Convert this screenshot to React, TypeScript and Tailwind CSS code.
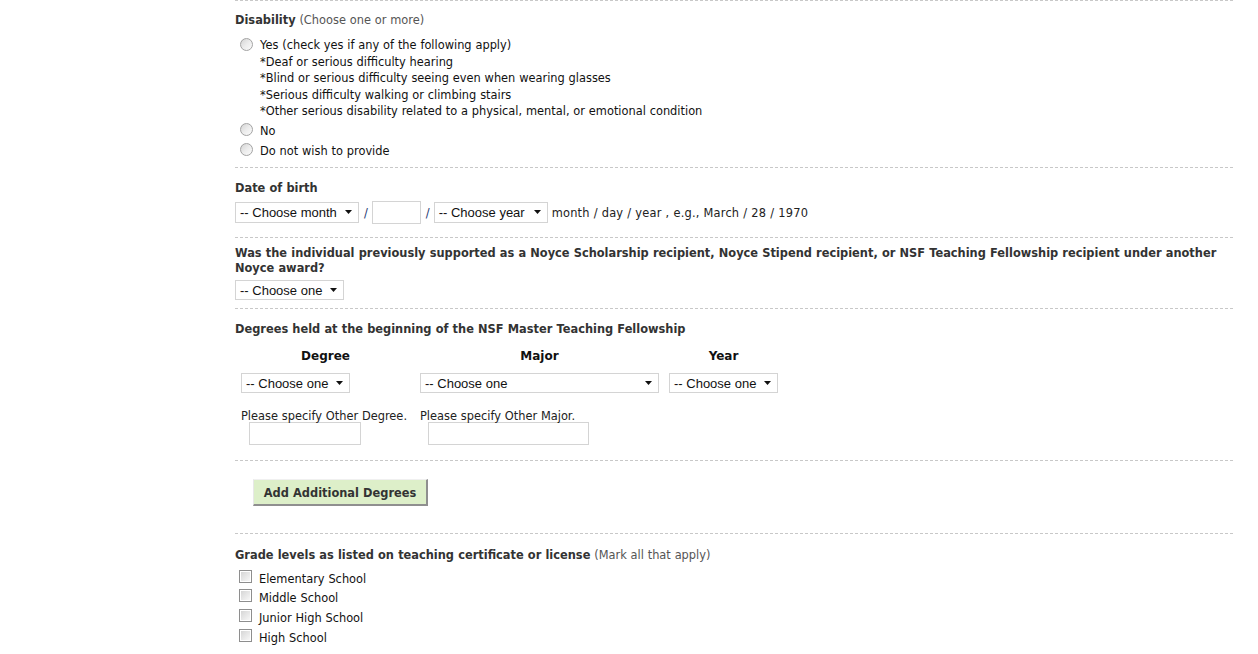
import React from "react";

const Radio = ({ className = "" }: { className?: string }) => (
  <span
    className={`block w-[13px] h-[13px] rounded-full border border-[#a3a3a3] bg-linear-to-br from-[#d4d4d4] via-[#ececec] to-[#fbfbfb] ${className}`}
  />
);

const Checkbox = () => (
  <span className="block w-[13px] h-[13px] border border-[#8e8e8e] bg-white p-[1px]">
    <span className="block w-full h-full bg-linear-to-br from-[#d6d6d6] to-[#f7f7f7]" />
  </span>
);

const Select = ({ label, w, h = "h-[20px]" }: { label: string; w: string; h?: string }) => (
  <div
    className={`${w} ${h} flex items-center justify-between border border-[#d4d4d4] bg-white pl-[4px] pr-[6px] font-['Liberation_Sans',Arial,sans-serif] text-[13px] text-[#111] leading-none [word-spacing:0px]`}
  >
    <span className="whitespace-nowrap">{label}</span>
    <svg width="7" height="4" viewBox="0 0 7 4" className="shrink-0">
      <path d="M0 0h7L3.5 4z" fill="#111" />
    </svg>
  </div>
);

const TextBox = ({ w, h = "h-[23px]" }: { w: string; h?: string }) => (
  <div className={`${w} ${h} border border-[#d4d4d4] bg-white`} />
);

const Section = ({
  className = "",
  children,
}: {
  className?: string;
  children: React.ReactNode;
}) => (
  <section className={`border-t border-dashed border-[#c8c8c8] ${className}`}>
    {children}
  </section>
);

export default function App() {
  return (
    <div className="w-[1258px] h-[654px] overflow-hidden bg-white font-['DejaVu_Sans',Verdana,sans-serif] text-[11.4px] [word-spacing:0.2px] text-[#111]">
      <div className="ml-[235px] w-[998px]">
        {/* Disability */}
        <Section className="pt-[11px] pb-[6px]">
          <div className="leading-[16px] text-[#333]">
            <span className="font-bold">Disability</span>{" "}
            <span className="text-[#555]">(Choose one or more)</span>
          </div>
          <div className="mt-[9px]">
            <div className="flex leading-[16.5px]">
              <div className="w-[25px] pl-[5px] pt-[1px]">
                <Radio />
              </div>
              <div>
                <div>Yes (check yes if any of the following apply)</div>
                <div>*Deaf or serious difficulty hearing</div>
                <div>*Blind or serious difficulty seeing even when wearing glasses</div>
                <div>*Serious difficulty walking or climbing stairs</div>
                <div>
                  *Other serious disability related to a physical, mental, or emotional condition
                </div>
              </div>
            </div>
            <div className="flex leading-[20px] mt-[1.5px]">
              <div className="w-[25px] pl-[5px] pt-[2px]">
                <Radio />
              </div>
              <div>No</div>
            </div>
            <div className="flex leading-[20px]">
              <div className="w-[25px] pl-[5px] pt-[2px]">
                <Radio />
              </div>
              <div>Do not wish to provide</div>
            </div>
          </div>
        </Section>

        {/* Date of birth */}
        <Section className="pt-[12px] pb-[14px]">
          <div className="leading-[16px] font-bold text-[#333]">Date of birth</div>
          <div className="mt-[5px] h-[22px] flex items-center">
            <Select label="-- Choose month" w="w-[124px]" h="h-[21px]" />
            <span className="ml-[5px] mr-[4px] mt-[3px] text-[#1d3770]">/</span>
            <TextBox w="w-[49px]" h="h-[23px]" />
            <span className="ml-[5px] mr-[4px] mt-[3px] text-[#1d3770]">/</span>
            <Select label="-- Choose year" w="w-[114px]" h="h-[21px]" />
            <span className="ml-[4px] mt-[3px] text-[#222] tracking-[0.2px]">
              month / day / year , e.g., March / 28 / 1970
            </span>
          </div>
        </Section>

        {/* Noyce */}
        <Section className="pt-[8px] pb-[8px]">
          <div className="leading-[15px] font-bold text-[#333]">
            <div className="whitespace-nowrap">
              Was the individual previously supported as a Noyce Scholarship recipient, Noyce
              Stipend recipient, or NSF Teaching Fellowship recipient under another
            </div>
            <div>Noyce award?</div>
          </div>
          <div className="mt-[4px]">
            <Select label="-- Choose one" w="w-[109px]" />
          </div>
        </Section>

        {/* Degrees */}
        <Section className="pt-[12px] pb-[15px]">
          <div className="leading-[16px] font-bold text-[#333]">
            Degrees held at the beginning of the NSF Master Teaching Fellowship
          </div>
          <div className="mt-[11px] ml-[6px] grid grid-cols-[169px_239px_109px] gap-x-[10px]">
            <div className="text-center font-bold text-[12px] leading-[16px] text-[#111]">Degree</div>
            <div className="text-center font-bold text-[12px] leading-[16px] text-[#111]">Major</div>
            <div className="text-center font-bold text-[12px] leading-[16px] text-[#111]">Year</div>

            <div className="mt-[9px]">
              <Select label="-- Choose one" w="w-[109px]" />
            </div>
            <div className="mt-[9px]">
              <Select label="-- Choose one" w="w-[239px]" />
            </div>
            <div className="mt-[9px]">
              <Select label="-- Choose one" w="w-[109px]" />
            </div>

            <div className="mt-[17px]">
              <div className="leading-[12px] whitespace-nowrap text-[#222]">
                Please specify Other Degree.
              </div>
              <div className="ml-[8px]">
                <TextBox w="w-[112px]" />
              </div>
            </div>
            <div className="mt-[17px]">
              <div className="leading-[12px] whitespace-nowrap text-[#222]">
                Please specify Other Major.
              </div>
              <div className="ml-[8px]">
                <TextBox w="w-[161px]" />
              </div>
            </div>
            <div />
          </div>
        </Section>

        {/* Add button */}
        <Section className="pt-[18px] pb-[27px]">
          <div className="ml-[18px] w-[175px] h-[27px] pt-[4px] flex items-center justify-center bg-[#ddefc9] border border-t-[#f0f0f0] border-l-[#e8e8e8] border-b-[#8f8f8f] border-r-[#8f8f8f] border-b-2 border-r-2 font-bold text-[#333] whitespace-nowrap">
            Add Additional Degrees
          </div>
        </Section>

        {/* Grade levels */}
        <Section className="pt-[12.5px]">
          <div className="leading-[16px] text-[#333]">
            <span className="font-bold">
              Grade levels as listed on teaching certificate or license
            </span>{" "}
            <span className="text-[#555]">(Mark all that apply)</span>
          </div>
          <div className="mt-[7px]">
            {["Elementary School", "Middle School", "Junior High School", "High School"].map(
              (t) => (
                <div key={t} className="flex h-[19.7px] leading-[19.7px]">
                  <div className="w-[24px] pl-[4px]">
                    <Checkbox />
                  </div>
                  <div>{t}</div>
                </div>
              )
            )}
          </div>
        </Section>
      </div>
    </div>
  );
}
